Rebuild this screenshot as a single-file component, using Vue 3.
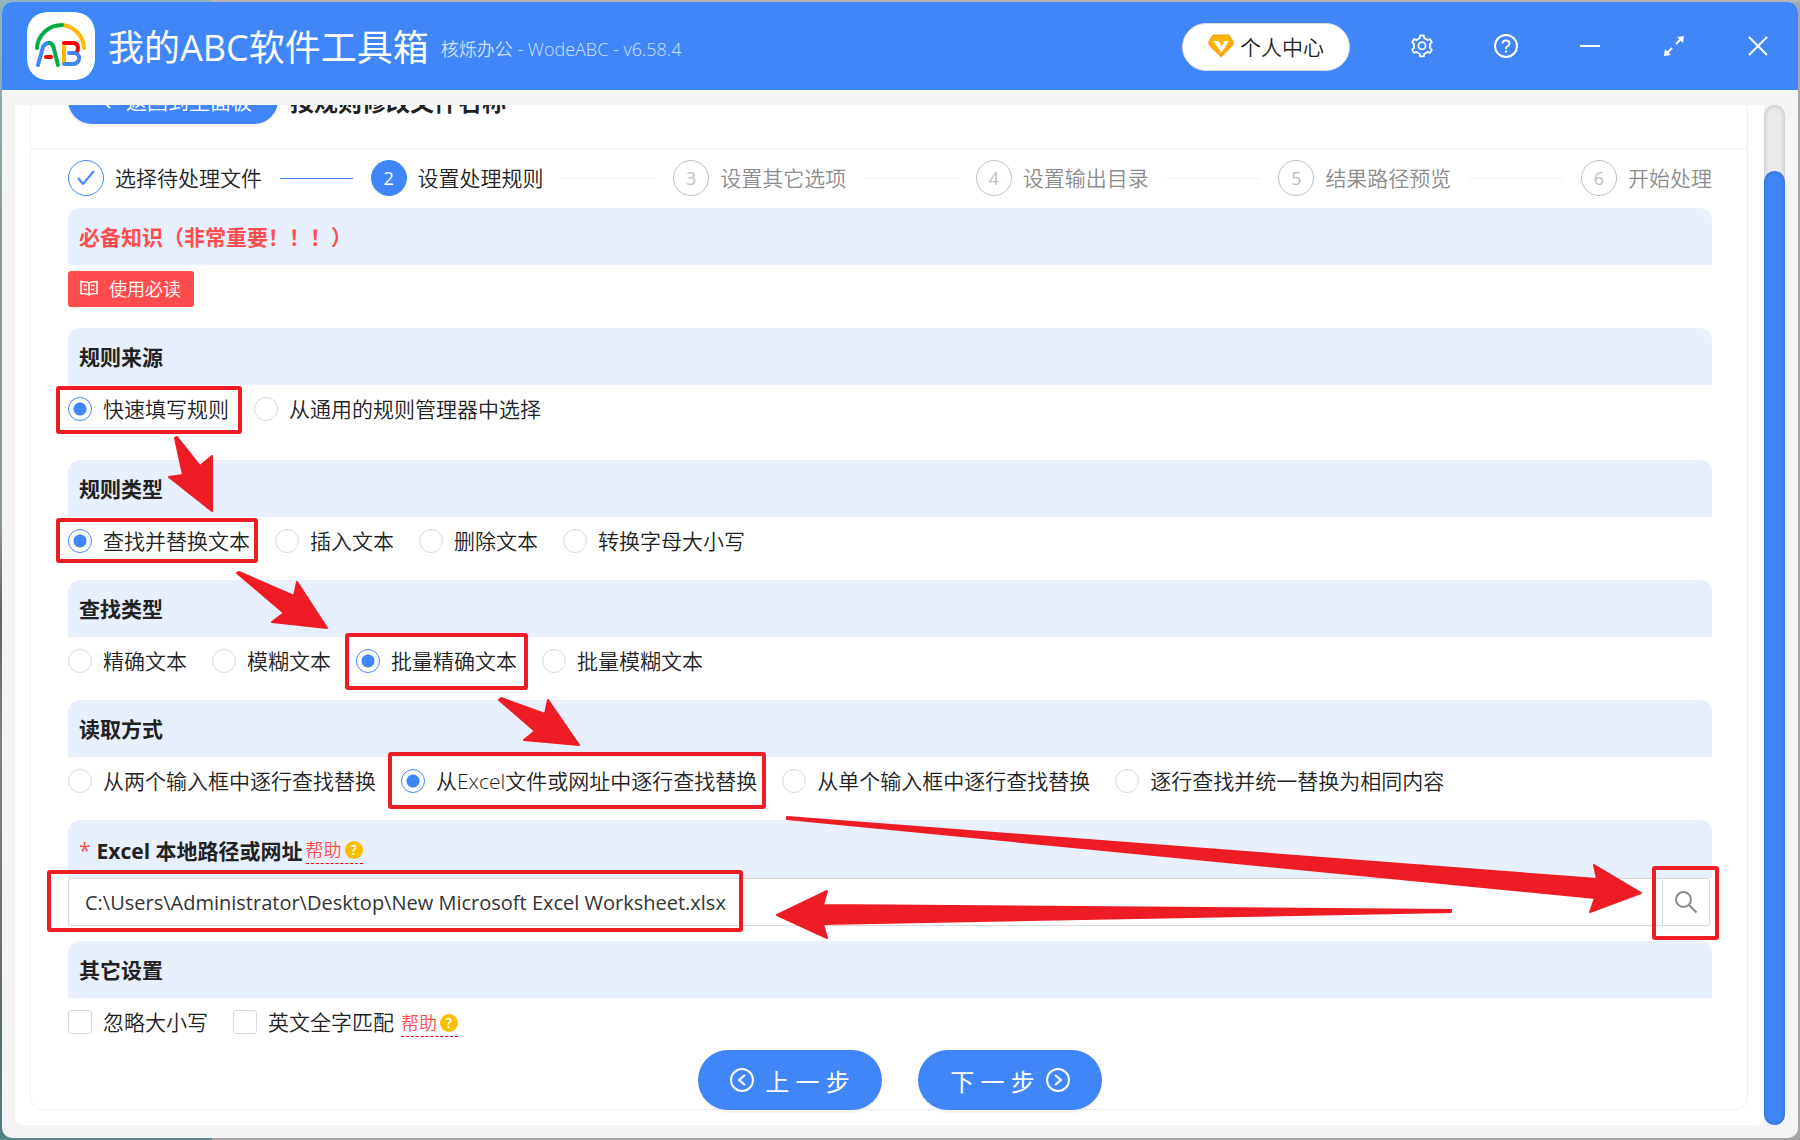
<template>
  <div class="desktop">
    <div class="window">
      <!-- title bar -->
      <header class="titlebar">
        <svg class="logo" viewBox="0 0 68 68" aria-hidden="true">
          <rect width="68" height="68" rx="20" fill="#fff" />
          <g fill="none" stroke-width="4" stroke-linecap="round" stroke-linejoin="round">
            <path stroke="#ffb900" d="M35 13A24 24 0 0 1 57 36" />
            <path stroke="#00ac47" d="M10 36A25 24 0 0 1 35 13" />
            <path stroke="#4285f4" d="M11 53L16 35Q18 31 22 31" />
            <path stroke="#00ac47" d="M23 31Q26 32 27 37L31 53" />
            <path stroke="#f00" d="M19 45H24" />
            <path stroke="#ffb900" d="M37 34V50" />
            <path stroke="#f00" d="M37 31H46Q51 31 51 36Q51 39 49 41" />
            <path stroke="#4285f4" d="M42 41H48Q53 43 52 47Q51 52 46 52H37" />
          </g>
        </svg>
        <h1 class="app-name">我的ABC软件工具箱</h1>
        <span class="app-version">核烁办公 - WodeABC - v6.58.4</span>
        <button class="user-btn" type="button">
          <svg width="26" height="24" viewBox="0 0 26 24" aria-hidden="true">
            <path fill="#ffa414" d="M5 0.500H21L25.500 7V11L13 23.500L0.500 11V7Z" />
            <path fill="#ffb400" d="M6 2H20L24 8L13 20L2 8Z" />
            <path fill="#fff" d="M5 7H10.500L13.500 12.500L16 8.500L14.500 7H21L13.500 18.500Z" />
          </svg>
          个人中心
        </button>
        <nav class="window-tools">
          <button class="tool-btn" type="button" aria-label="设置">
            <svg width="26" height="26" viewBox="0 0 1024 1024" fill="currentColor">
              <path
                d="M924.8 625.7l-65.5-56c3.1-19 4.700-38.400 4.700-57.800s-1.600-38.800-4.700-57.800l65.500-56a32.030 32.030 0 009.300-35.200l-.9-2.600a443.740 443.740 0 00-79.700-137.900l-1.800-2.100a32.120 32.120 0 00-35.100-9.500l-81.300 28.900c-30-24.600-63.500-44-99.700-57.600l-15.700-85a32.050 32.050 0 00-25.800-25.700l-2.700-.5c-52.100-9.400-106.900-9.400-159 0l-2.700.5a32.050 32.050 0 00-25.800 25.700l-15.800 85.400a351.860 351.860 0 00-99 57.400l-81.900-29.100a32 32 0 00-35.100 9.500l-1.800 2.100a446.020 446.020 0 00-79.700 137.900l-.9 2.600c-4.500 12.500-.8 26.500 9.300 35.200l66.300 56.600c-3.100 18.800-4.600 38-4.600 57.100 0 19.200 1.500 38.400 4.600 57.100L99 625.500a32.030 32.030 0 00-9.300 35.200l.9 2.600c18.100 50.400 44.900 96.900 79.700 137.900l1.800 2.100a32.120 32.120 0 0035.100 9.500l81.900-29.100c29.800 24.500 63.100 43.900 99 57.400l15.800 85.400a32.050 32.050 0 0025.800 25.700l2.700.5a449.400 449.400 0 00159 0l2.700-.5a32.050 32.050 0 0025.800-25.700l15.700-85a350 350 0 0099.700-57.600l81.300 28.900a32 32 0 0035.100-9.500l1.800-2.100c34.800-41.100 61.600-87.500 79.700-137.900l.9-2.600c4.500-12.300.8-26.300-9.300-35zM788.300 465.900c2.500 15.100 3.800 30.600 3.800 46.100s-1.300 31-3.800 46.100l-6.600 40.100 74.700 63.900a370.030 370.030 0 01-42.600 73.600L721 702.800l-31.400 25.800c-23.900 19.600-50.500 35-79.300 45.800l-38.100 14.300-17.900 97a377.500 377.500 0 01-85 0l-17.900-97.200-37.800-14.500c-28.500-10.800-55-26.200-78.700-45.700l-31.400-25.900-93.400 33.200c-17-22.900-31.200-47.600-42.600-73.600l75.500-64.500-6.500-40c-2.400-14.900-3.700-30.300-3.700-45.500 0-15.300 1.200-30.600 3.700-45.500l6.500-40-75.500-64.500c11.300-26.100 25.600-50.700 42.600-73.600l93.400 33.200 31.400-25.900c23.700-19.500 50.200-34.900 78.700-45.700l37.900-14.300 17.900-97.200c28.100-3.200 56.800-3.200 85 0l17.900 97 38.100 14.300c28.700 10.800 55.400 26.200 79.300 45.800l31.400 25.800 92.800-32.900c17 22.900 31.200 47.600 42.600 73.600L781.800 426l6.500 39.900zM512 326c-97.200 0-176 78.800-176 176s78.800 176 176 176 176-78.800 176-176-78.800-176-176-176zm79.200 255.200A111.600 111.600 0 01512 614c-29.900 0-58-11.700-79.200-32.800A111.600 111.600 0 01400 502c0-29.900 11.700-58 32.800-79.200C454 401.600 482.100 390 512 390c29.900 0 58 11.600 79.200 32.800A111.600 111.600 0 01624 502c0 29.900-11.700 58-32.800 79.200z"
              />
            </svg>
          </button>
          <button class="tool-btn" type="button" aria-label="帮助">
            <svg width="26" height="26" viewBox="0 0 26 26" fill="none" stroke="currentColor" stroke-width="2">
              <circle cx="13" cy="13" r="11" />
              <path d="M9.500 10.500Q9.500 7.500 13 7.500Q16.500 7.500 16.500 10.500Q16.500 12.500 14 13.500Q13 14 13 16" stroke-width="1.800" />
              <path d="M13 17.500V19.500" />
            </svg>
          </button>
          <button class="tool-btn" type="button" aria-label="最小化">
            <svg width="26" height="26" viewBox="0 0 26 26" stroke="currentColor" stroke-width="2">
              <path d="M3 13H23" />
            </svg>
          </button>
          <button class="tool-btn" type="button" aria-label="最大化">
            <svg width="26" height="26" viewBox="0 0 26 26">
              <path d="M5.500 20.500L11 15M15 11L20.500 5.500" stroke="currentColor" stroke-width="2" />
              <path fill="currentColor" d="M23 3L22 10L16 4ZM3 23L4 16L10 22Z" />
            </svg>
          </button>
          <button class="tool-btn" type="button" aria-label="关闭">
            <svg width="26" height="26" viewBox="0 0 26 26" stroke="currentColor" stroke-width="2">
              <path d="M4 4L22 22M22 4L4 22" />
            </svg>
          </button>
        </nav>
      </header>

      <div class="body">
        <main class="panel">
          <div class="card">
            <div class="card-head">
              <button class="back-btn" type="button">
                <svg width="12" height="20" viewBox="0 0 12 20" fill="none" stroke="currentColor" stroke-width="2">
                  <path d="M10 2L2 10L10 18" />
                </svg>
                返回到主面板
              </button>
              <h2 class="page-title">按规则修改文件名称</h2>
            </div>

            <div class="card-body">
              <ol class="steps">
                <li
                  v-for="(step, index) in steps"
                  :key="step"
                  class="step"
                  :class="{ done: index < current, active: index === current }"
                >
                  <span class="step-icon">
                    <svg v-if="index < current" width="18" height="18" viewBox="0 0 18 18" fill="none" stroke="currentColor" stroke-width="2">
                      <path d="M1 9L6 15L17 2" />
                    </svg>
                    <template v-else>{{ index + 1 }}</template>
                  </span>
                  <span class="step-title">{{ step }}</span>
                </li>
              </ol>

              <section class="section">
                <h3 class="section-title danger">必备知识（非常重要！！！）</h3>
                <div class="section-content compact">
                  <button class="read-btn" type="button">
                    <svg width="18" height="18" viewBox="0 0 18 18" fill="none" stroke="currentColor" stroke-width="1.500">
                      <path d="M9 4Q7 2.500 1 2.500V14.500Q7 14.500 9 16Q11 14.500 17 14.500V2.500Q11 2.500 9 4V15.500" />
                      <path d="M3.500 6.500H7M3.500 10.500H7M11 6.500H14.500M11 10.500H14.500" />
                    </svg>
                    使用必读
                  </button>
                </div>
              </section>

              <!-- radio groups -->
              <section v-for="group in groups" :key="group.name" class="section">
                <h3 class="section-title">{{ group.title }}</h3>
                <div class="section-content" :class="{ tall: group.tall }">
                  <label v-for="option in group.options" :key="option" class="option">
                    <input v-model="form[group.name]" type="radio" :name="group.name" :value="option" />
                    <span>{{ option }}</span>
                  </label>
                </div>
              </section>

              <section class="section">
                <h3 class="section-title path-title">
                  <span class="required">*</span>
                  <label for="excel-path">Excel 本地路径或网址</label>
                  <a class="help" href="#">帮助<i class="help-icon">?</i></a>
                </h3>
                <div class="path-row">
                  <input id="excel-path" v-model="path" class="path-input" type="text" />
                  <button class="search-btn" type="button" aria-label="浏览">
                    <svg width="24" height="24" viewBox="0 0 24 24" fill="none" stroke="currentColor" stroke-width="2">
                      <circle cx="9.500" cy="9.500" r="7.500" />
                      <path d="M15 15L22.500 22.500" />
                    </svg>
                  </button>
                </div>
              </section>

              <section class="section">
                <h3 class="section-title">其它设置</h3>
                <div class="section-content last">
                  <label class="option">
                    <input v-model="ignoreCase" type="checkbox" />
                    <span>忽略大小写</span>
                  </label>
                  <label class="option with-help">
                    <input v-model="wholeWord" type="checkbox" />
                    <span>英文全字匹配</span>
                  </label>
                  <a class="help" href="#">帮助<i class="help-icon">?</i></a>
                </div>
              </section>
            </div>
          </div>
        </main>
        <div class="scrollbar"><div class="thumb"></div></div>
      </div>

      <footer class="actions">
        <button class="action-btn" type="button">
          <svg width="24" height="24" viewBox="0 0 24 24" fill="none" stroke="currentColor" stroke-width="2">
            <circle cx="12" cy="12" r="11" />
            <path d="M15 7L9 12L15 17" />
          </svg>
          上 一 步
        </button>
        <button class="action-btn" type="button">
          下 一 步
          <svg width="24" height="24" viewBox="0 0 24 24" fill="none" stroke="currentColor" stroke-width="2">
            <circle cx="12" cy="12" r="11" />
            <path d="M9 7L15 12L9 17" />
          </svg>
        </button>
      </footer>
    </div>

    <!-- red guide marks over the form -->
    <svg class="marks" aria-hidden="true">
      <rect
        v-for="(box, index) in boxes"
        :key="index"
        :x="box[0] + 2"
        :y="box[1] + 2"
        :width="box[2] - box[0] - 4"
        :height="box[3] - box[1] - 4"
        rx="1"
      />
      <polygon v-for="points in arrows" :key="points" :points="points" />
    </svg>
  </div>
</template>

<script setup>
import { reactive, ref } from "vue";

const steps = ["选择待处理文件", "设置处理规则", "设置其它选项", "设置输出目录", "结果路径预览", "开始处理"];
const current = ref(1);

const groups = [
  {
    name: "source",
    title: "规则来源",
    tall: true,
    options: ["快速填写规则", "从通用的规则管理器中选择"],
  },
  {
    name: "ruleType",
    title: "规则类型",
    options: ["查找并替换文本", "插入文本", "删除文本", "转换字母大小写"],
  },
  {
    name: "findType",
    title: "查找类型",
    options: ["精确文本", "模糊文本", "批量精确文本", "批量模糊文本"],
  },
  {
    name: "readMode",
    title: "读取方式",
    options: [
      "从两个输入框中逐行查找替换",
      "从Excel文件或网址中逐行查找替换",
      "从单个输入框中逐行查找替换",
      "逐行查找并统一替换为相同内容",
    ],
  },
];

const form = reactive({
  source: "快速填写规则",
  ruleType: "查找并替换文本",
  findType: "批量精确文本",
  readMode: "从Excel文件或网址中逐行查找替换",
});
const path = ref("C:\\Users\\Administrator\\Desktop\\New Microsoft Excel Worksheet.xlsx");
const ignoreCase = ref(false);
const wholeWord = ref(false);

// left, top, right, bottom
const boxes = [
  [56, 386, 242, 434],
  [56, 518, 258, 563],
  [345, 633, 528, 690],
  [388, 752, 766, 809],
  [47, 870, 743, 932],
  [1652, 866, 1719, 940],
];
const arrows = [
  "175,438 177,437 200,466 212,456 212,511 169,477 183,475",
  "237,573 239,572 294,596 297,582 327,628 272,622 284,613",
  "499,700 501,698 545,714 548,700 579,745 524,740 535,731",
  "787,817 1597,879 1594,865 1641,893 1590,912 1595,898 787,819",
  "777,915 827,891 823,905 1451,910 1451,912 823,924 827,938",
];
</script>

<style>
body {
  margin: 0;
  overflow: hidden;
}
</style>

<style scoped>
* {
  box-sizing: border-box;
}
.desktop {
  position: relative;
  height: 100vh;
  padding: 2px;
  background: linear-gradient(90deg, #5b888c 212px, #a3a3a3 212px) bottom / 100% 2px no-repeat,
    linear-gradient(90deg, #8fb4c0 212px, #b4b4b4 212px) top / 100% 2px no-repeat,
    linear-gradient(#8fb4c0, #8b9a9f 20%, #8b9a9f 45%, #5f6565 54%, #857c80 65%, #5b6c74 90%, #4f8185) left / 50% 100% no-repeat,
    #a6a6a6;
  font-family: "Open Sans", "Noto Sans CJK SC", sans-serif;
  font-size: 21px;
  font-weight: 350;
  color: #222;
}
.window {
  position: relative;
  display: flex;
  flex-direction: column;
  height: 100%;
  border-radius: 10px;
  background: #f4f4f4;
  overflow: hidden;
}
button {
  font-family: inherit;
  font-weight: inherit;
  cursor: pointer;
}
h1,
h2,
h3 {
  margin: 0;
}

/* title bar */
.titlebar {
  display: flex;
  flex-shrink: 0;
  align-items: center;
  height: 88px;
  padding: 0 14px 0 25px;
  background: #4086f8;
  color: #fff;
}
.logo {
  width: 68px;
  height: 68px;
  border-radius: 20px;
  box-shadow: 0 0 0 2px #2f8bff;
}
.app-name {
  margin: 4px 0 0 13px;
  font-size: 36px;
  font-weight: 400;
  line-height: 52px;
}
.app-version {
  margin: 4px auto 0 12px;
  font-size: 18px;
  color: #cfe0fd;
}
.user-btn {
  display: flex;
  align-items: center;
  gap: 6px;
  height: 48px;
  margin-top: 2px;
  padding: 0 25px 2px 25px;
  border: 1px solid #d9d9d9;
  border-radius: 24px;
  background: #fff;
  font-size: 21px;
  color: #222;
}
.window-tools {
  display: flex;
  gap: 32px;
  margin-left: 46px;
}
.tool-btn {
  display: flex;
  justify-content: center;
  align-items: center;
  width: 52px;
  height: 52px;
  padding: 0;
  border: none;
  background: none;
  color: #fff;
}

/* scroll area */
.body {
  display: flex;
  flex: 1;
  min-height: 0;
  padding: 15px 13px 13px;
}
.panel {
  display: flex;
  flex: 1;
  flex-direction: column;
  justify-content: flex-end;
  padding: 0 16px 15px 15px;
  border-radius: 0 0 8px 8px;
  background: #fff;
  overflow: hidden;
}
.scrollbar {
  display: flex;
  flex-direction: column;
  width: 21px;
  padding-top: 66px;
  border-radius: 11px;
  background: #e9e9e9;
  box-shadow: inset 0 0 5px rgba(0, 0, 0, 0.2);
}
.thumb {
  flex: 1;
  border-radius: 11px;
  background: #4086f8;
  box-shadow: inset 0 0 5px rgba(0, 0, 0, 0.2);
}
.card {
  flex-shrink: 0;
  border: 1px solid #f0f0f0;
  border-radius: 12px;
}
.card-head {
  display: flex;
  align-items: center;
  gap: 12px;
  height: 97px;
  padding: 0 37px;
  border-bottom: 1px solid #f0f0f0;
}
.back-btn {
  display: flex;
  align-items: center;
  gap: 14px;
  height: 48px;
  padding: 0 26px 0 32px;
  border: none;
  border-radius: 24px;
  background: #4086f8;
  box-shadow: 0 3px 0 rgba(0, 0, 0, 0.04);
  font-size: 21px;
  color: #fff;
}
.page-title {
  font-size: 24px;
  font-weight: 700;
}
.card-body {
  padding: 11px 35px 63px 37px;
}

/* steps */
.steps {
  display: flex;
  margin: 0 0 12px;
  padding: 0;
  list-style: none;
}
.step {
  display: flex;
  flex: 1;
  align-items: center;
  color: #8c8c8c;
}
.step:last-child {
  flex: none;
}
.step:not(:last-child)::after {
  content: "";
  flex: 1;
  height: 1px;
  margin: 0 18px;
  background: #f0f0f0;
}
.step-icon {
  display: flex;
  justify-content: center;
  align-items: center;
  width: 36px;
  height: 36px;
  margin-right: 11px;
  border: 1px solid #bfbfbf;
  border-radius: 50%;
  font-size: 18px;
  font-weight: 400;
  color: #bfbfbf;
}
.step-title {
  line-height: 36px;
}
.step.done,
.step.active {
  color: #222;
}
.step.done .step-icon {
  border-color: #4086f8;
  color: #4086f8;
}
.step.done::after {
  background: #4086f8;
}
.step.active .step-icon {
  border-color: #4086f8;
  background: #4086f8;
  color: #fff;
}

/* form */
.section-title {
  display: flex;
  align-items: center;
  height: 57px;
  padding: 0 11px 2px;
  border-radius: 12px 12px 0 0;
  background: #e8effd;
  font-size: 21px;
  font-weight: 700;
}
.section-title.danger {
  color: #ff4d4f;
}
.section-content {
  display: flex;
  align-items: flex-start;
  gap: 25px;
  height: 63px;
  padding-top: 12px;
}
.section-content.compact {
  padding-top: 6px;
}
.section-content.tall {
  height: 75px;
}
.section-content.last {
  height: 48px;
}
.read-btn {
  display: flex;
  align-items: center;
  gap: 11px;
  height: 36px;
  padding: 0 13px 2px 12px;
  border: none;
  border-radius: 3px;
  background: #ff4d4f;
  box-shadow: 0 3px 0 rgba(0, 0, 0, 0.04);
  font-size: 18px;
  color: #fff;
}
.option {
  display: flex;
  align-items: center;
  gap: 11px;
  line-height: 24px;
  cursor: pointer;
}
.option input {
  appearance: none;
  width: 24px;
  height: 24px;
  margin: 0;
  border: 1px solid #d9d9d9;
  border-radius: 3px;
  background: #fff;
}
.option input[type="radio"] {
  border-radius: 50%;
}
.option input[type="radio"]:checked {
  border-color: #4086f8;
  background: radial-gradient(circle, #4086f8 6px, #fff 7px);
}
.option.with-help {
  margin-right: -18px;
}
.path-title {
  height: 58px;
  padding-top: 3px;
}
.required {
  margin-right: 6px;
  font-weight: 400;
  color: #ff4d4f;
}
.help {
  display: flex;
  align-items: center;
  gap: 3px;
  border-bottom: 1px dashed #f00;
  font-size: 18px;
  font-weight: 350;
  line-height: 26px;
  color: #ff4d4f;
  text-decoration: none;
}
.path-title .help {
  margin: 2px 0 0 3px;
}
.help-icon {
  width: 18px;
  height: 18px;
  border-radius: 50%;
  background: #fabf00;
  font-size: 14px;
  font-style: normal;
  font-weight: 600;
  line-height: 18px;
  text-align: center;
  color: #fff;
}
.path-row {
  display: flex;
  height: 63px;
  padding: 0 2px 15px 0;
}
.path-input {
  flex: 1;
  min-width: 0;
  padding: 0 16px;
  border: 1px solid #d9d9d9;
  border-right: none;
  border-radius: 3px 0 0 3px;
  outline: none;
  font-family: inherit;
  font-size: 20px;
  font-weight: 400;
  color: #333;
}
.search-btn {
  display: flex;
  justify-content: center;
  align-items: center;
  width: 48px;
  padding: 0;
  border: 1px solid #d9d9d9;
  border-radius: 0 3px 3px 0;
  background: #fff;
  box-shadow: 0 3px 0 rgba(0, 0, 0, 0.02);
  color: #8c8c8c;
}

/* bottom buttons */
.actions {
  position: absolute;
  right: 0;
  bottom: 28px;
  left: 0;
  display: flex;
  justify-content: center;
  gap: 36px;
}
.action-btn {
  display: flex;
  justify-content: center;
  align-items: center;
  gap: 11px;
  width: 184px;
  height: 60px;
  border: none;
  border-radius: 30px;
  background: #4086f8;
  box-shadow: 0 3px 0 rgba(0, 0, 0, 0.04);
  font-size: 24px;
  font-weight: 400;
  color: #fff;
}

.marks {
  position: absolute;
  top: 0;
  left: 0;
  width: 100%;
  height: 100%;
  pointer-events: none;
}
.marks rect {
  fill: none;
  stroke: #ee1c24;
  stroke-width: 4;
}
.marks polygon {
  fill: #ee1c24;
  stroke: #ee1c24;
  stroke-width: 2;
  stroke-linejoin: round;
}
</style>
